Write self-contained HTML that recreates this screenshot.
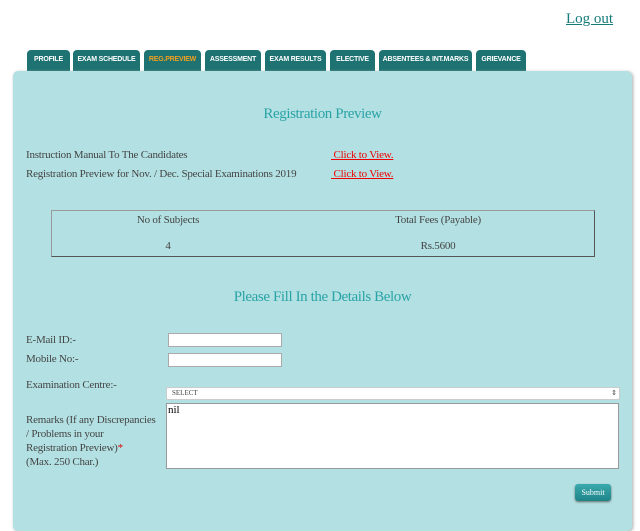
<!DOCTYPE html>
<html><head><style>
body{margin:0;background:#fff;font-family:"Liberation Serif",serif;width:640px;height:516px;overflow:hidden;position:relative;color:#444}
.a{position:absolute}
.tab{position:absolute;top:50px;height:21px;background:#1e7372;border-radius:4px 4px 0 0;color:#fff;font:bold 7px "Liberation Sans",sans-serif;text-align:center;line-height:20px;letter-spacing:-0.2px}
.panel{position:absolute;left:13px;top:71px;width:619px;height:460px;background:#b3e1e3;border-radius:5px;box-shadow:1px 1px 3px #aaa}
.t{font-size:11px;color:#444;letter-spacing:-0.22px}
.h{font-size:15px;color:#2aa3a6;text-align:center;width:619px;left:13px;letter-spacing:-0.4px}
.lnk{font-size:11px;color:#e00;text-decoration:underline;letter-spacing:-0.22px}
input,select,textarea{position:absolute;background:#fff;border:1px solid #aaa;box-sizing:border-box;margin:0}
</style></head><body>
<div class="a" style="left:566px;top:11px;font-size:15px;color:#157a7a;text-decoration:underline">Log out</div>
<div class="tab" style="left:27px;width:43px">PROFILE</div>
<div class="tab" style="left:73px;width:67px">EXAM SCHEDULE</div>
<div class="tab" style="left:144px;width:57px;color:#f0a020">REG.PREVIEW</div>
<div class="tab" style="left:205px;width:56px">ASSESSMENT</div>
<div class="tab" style="left:265px;width:61px">EXAM RESULTS</div>
<div class="tab" style="left:330px;width:45px">ELECTIVE</div>
<div class="tab" style="left:379px;width:93px">ABSENTEES &amp; INT.MARKS</div>
<div class="tab" style="left:476px;width:50px">GRIEVANCE</div>
<div class="panel"></div>
<div class="a h" style="top:106px">Registration Preview</div>
<div class="a t" style="left:26px;top:149px">Instruction Manual To The Candidates</div>
<div class="a t" style="left:26px;top:168px">Registration Preview for Nov. / Dec. Special Examinations 2019</div>
<div class="a lnk" style="left:331px;top:149px">&nbsp;Click to View.</div>
<div class="a lnk" style="left:331px;top:168px">&nbsp;Click to View.</div>
<div class="a" style="left:51px;top:210px;width:542px;height:45px;border:1px solid #555;border-top-color:#999;border-left-color:#999"></div>
<div class="a t" style="left:52px;top:214px;width:232px;text-align:center">No of Subjects</div>
<div class="a t" style="left:322px;top:214px;width:232px;text-align:center">Total Fees (Payable)</div>
<div class="a t" style="left:52px;top:240px;width:232px;text-align:center">4</div>
<div class="a t" style="left:322px;top:240px;width:232px;text-align:center">Rs.5600</div>
<div class="a h" style="top:289px">Please Fill In the Details Below</div>
<div class="a t" style="left:26px;top:334px">E-Mail ID:-</div>
<div class="a t" style="left:26px;top:353px">Mobile No:-</div>
<input style="left:168px;top:333px;width:114px;height:14px">
<input style="left:168px;top:353px;width:114px;height:14px">
<div class="a t" style="left:26px;top:379px">Examination Centre:-</div>
<div class="a" style="left:166px;top:387px;width:452px;height:11px;background:#fff;border:1px solid #ccc;border-radius:2px;font-size:7px;line-height:11px;text-indent:5px">SELECT<span style="position:absolute;right:2px;top:0">&#8661;</span></div>
<div class="a t" style="left:26px;top:413px;line-height:14px">Remarks (If any Discrepancies<br>/ Problems in your<br>Registration Preview)<span style="color:#d00">*</span><br>(Max. 250 Char.)</div>
<div class="a" style="left:166px;top:403px;width:453px;height:66px;background:#fff;border:1px solid #999;box-sizing:border-box;font-size:11px;color:#000;padding-left:1px;line-height:12px">nil</div>
<div class="a" style="left:575px;top:484px;width:36px;height:17px;background:linear-gradient(#3aa9ad,#1e8488);border-radius:3px;color:#fff;font-size:8px;line-height:17px;text-align:center;box-shadow:0 1px 2px #666">Submit</div>
</body></html>
